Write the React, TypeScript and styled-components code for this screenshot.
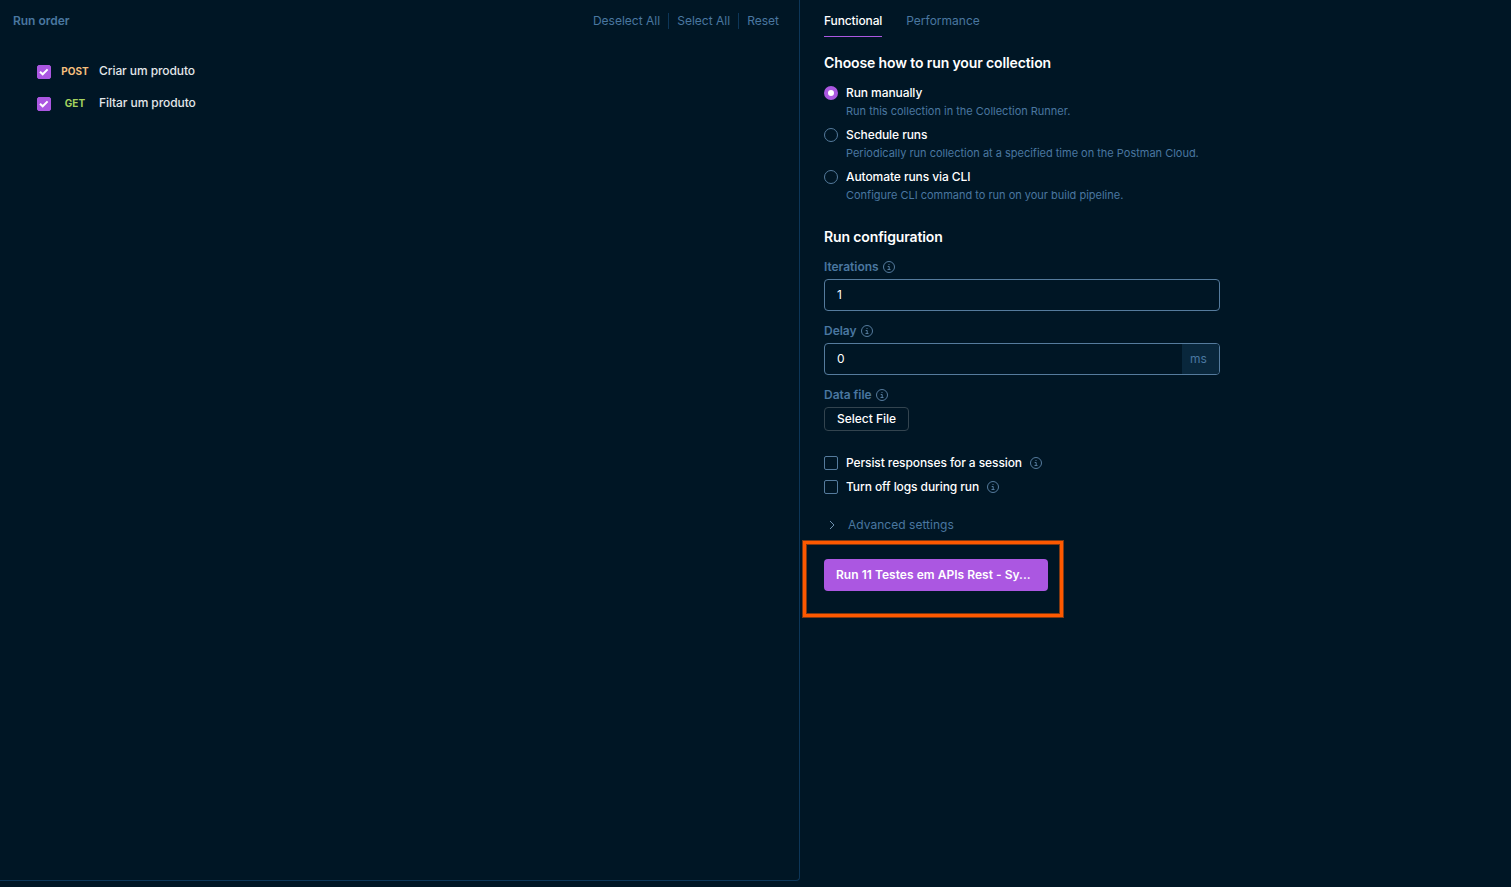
import React from "react";
import styled, { createGlobalStyle } from "styled-components";

const c = {
  bg: "#001625",
  line: "#0d3658",
  muted: "#4a77a0",
  control: "#557b9d",
  purple: "#ab57e1",
  white: "#ffffff",
};

const GlobalStyle = createGlobalStyle`
  * { box-sizing: border-box; }
  body {
    margin: 0;
    background: ${c.bg};
    color: ${c.white};
    font-family: Inter, "Liberation Sans", sans-serif;
    font-size: 12px;
    line-height: 16px;
  }
`;

const Page = styled.div`
  display: flex;
  align-items: flex-start;
  height: 887px;
  overflow: hidden;
`;

const OrderPanel = styled.section`
  width: 800px;
  height: 881px;
  flex: none;
  border: solid ${c.line};
  border-width: 0 1px 1px 0;
  border-bottom-right-radius: 4px;
`;

const OrderHeader = styled.header`
  display: flex;
  align-items: center;
  justify-content: space-between;
  height: 42px;
  padding: 0 12px 0 13px;
  color: ${c.muted};
`;

const OrderTitle = styled.span`
  font-weight: 600;
  letter-spacing: -0.03px;
`;

const Actions = styled.div`
  display: flex;
`;

const Action = styled.span`
  padding: 0 8px;
  letter-spacing: 0.01px;
  & + & {
    border-left: 1px solid ${c.line};
  }
`;

const Requests = styled.div`
  padding: 13px 0 0 37px;
`;

const RequestRow = styled.div`
  display: flex;
  align-items: center;
  height: 32px;
`;

const Method = styled.span<{ $color: string }>`
  width: 34px;
  margin: 0 7px 0 7px;
  text-align: center;
  font-size: 10px;
  font-weight: 700;
  color: ${(p) => p.$color};
`;

const RequestName = styled.span`
  font-weight: 500;
  color: #e3e7ea;
  letter-spacing: -0.08px;
`;

const Check = styled.span<{ $on?: boolean }>`
  display: flex;
  align-items: center;
  justify-content: center;
  flex: none;
  width: 14px;
  height: 14px;
  border: 1px solid ${(p) => (p.$on ? c.purple : c.control)};
  border-radius: 2px;
  background: ${(p) => (p.$on ? c.purple : "transparent")};
`;

const RequestCheck = styled(Check)`
  margin-top: 2px;
`;

const ConfigPanel = styled.section`
  flex: 1;
  padding: 0 0 0 24px;
`;

const Tabs = styled.nav`
  display: flex;
  gap: 24px;
  height: 37px;
`;

const Tab = styled.span<{ $active?: boolean }>`
  padding-top: 13px;
  color: ${(p) => (p.$active ? c.white : c.muted)};
  font-weight: ${(p) => (p.$active ? 500 : 400)};
  letter-spacing: ${(p) => (p.$active ? -0.12 : 0)}px;
  border-bottom: 1px solid ${(p) => (p.$active ? c.purple : "transparent")};
`;

const Heading = styled.h2<{ $top: number }>`
  margin: ${(p) => p.$top}px 0 0;
  font-size: 14px;
  font-weight: 600;
  line-height: 20px;
  letter-spacing: -0.12px;
`;

const RadioList = styled.div`
  padding-top: 12px;
`;

const RadioOption = styled.div`
  display: flex;
  gap: 8px;
  height: 42px;
`;

const Radio = styled.span<{ $on?: boolean }>`
  flex: none;
  width: 14px;
  height: 14px;
  margin-top: 1px;
  border-radius: 50%;
  border: ${(p) => (p.$on ? `4px solid ${c.purple}` : `1px solid ${c.control}`)};
  background: ${(p) => (p.$on ? c.white : "transparent")};
`;

const OptionLabel = styled.div`
  font-weight: 500;
  letter-spacing: -0.08px;
`;

const OptionHint = styled.div`
  margin-top: 2px;
  font-size: 11px;
  color: ${c.muted};
  letter-spacing: -0.01px;
`;

const FieldLabel = styled.div<{ $top: number }>`
  display: flex;
  align-items: center;
  gap: 4px;
  height: 16px;
  margin: ${(p) => p.$top}px 0 4px;
  font-weight: 600;
  letter-spacing: -0.03px;
  color: ${c.muted};
`;

const Input = styled.div`
  display: flex;
  align-items: center;
  justify-content: space-between;
  width: 396px;
  height: 32px;
  padding-left: 12px;
  border: 1px solid ${c.control};
  border-radius: 4px;
  overflow: hidden;
`;

const Unit = styled.span`
  display: flex;
  align-items: center;
  justify-content: center;
  width: 37px;
  height: 30px;
  padding-right: 4px;
  background: #09273c;
  color: ${c.muted};
`;

const FileButton = styled.div`
  display: flex;
  align-items: center;
  justify-content: center;
  width: 85px;
  height: 24px;
  border: 1px solid #33444f;
  border-radius: 4px;
  font-weight: 500;
`;

const CheckList = styled.div`
  display: flex;
  flex-direction: column;
  gap: 8px;
  padding-top: 24px;
`;

const CheckRow = styled.div`
  display: flex;
  align-items: center;
  gap: 8px;
  height: 16px;
  font-weight: 500;
  letter-spacing: -0.09px;
`;

const Advanced = styled.div`
  display: flex;
  align-items: center;
  gap: 10px;
  height: 16px;
  margin-top: 22px;
  padding-left: 2px;
  color: ${c.muted};
  letter-spacing: 0.03px;
`;

const Highlight = styled.div`
  width: 260px;
  height: 76px;
  margin: 8px 0 0 -21px;
  padding: 15px 0 0 18px;
  border: 3px solid #fe5900;
  box-shadow:
    0 0 0 1px rgba(254, 89, 0, 0.5),
    inset 0 0 0 1px rgba(254, 89, 0, 0.5);
`;

const RunButton = styled.div`
  width: 224px;
  height: 32px;
  padding: 0 12px;
  border-radius: 4px;
  background: ${c.purple};
  font-weight: 600;
  letter-spacing: 0.03px;
  line-height: 32px;
  white-space: nowrap;
`;

const Icon = styled.svg`
  display: block;
  flex: none;
  fill: none;
`;

const Tick = () => (
  <Icon width="12" height="12" viewBox="0 0 12 12" stroke="#fff" strokeWidth="2">
    <path d="M2 5.7 L4.7 8.3 L9.6 3.4" />
  </Icon>
);

const Info = () => (
  <Icon width="12" height="12" viewBox="0 0 12 12" stroke={c.control}>
    <circle cx="6" cy="6" r="5.5" />
    <path d="M4.7 5.5H6.2V8.5M4.5 8.5H7.5M5.5 3.5H6.5" />
  </Icon>
);

const Chevron = () => (
  <Icon width="12" height="12" viewBox="0 0 12 12" stroke="#6f91ae">
    <path d="M4 2 L8 6 L4 10" />
  </Icon>
);

const requests = [
  { method: "POST", color: "#f5bf7d", name: "Criar um produto" },
  { method: "GET", color: "#a4d35f", name: "Filtar um produto" },
];

const modes = [
  { label: "Run manually", hint: "Run this collection in the Collection Runner.", on: true },
  { label: "Schedule runs", hint: "Periodically run collection at a specified time on the Postman Cloud." },
  { label: "Automate runs via CLI", hint: "Configure CLI command to run on your build pipeline." },
];

export default function App() {
  return (
    <>
      <GlobalStyle />
      <Page>
        <OrderPanel>
          <OrderHeader>
            <OrderTitle>Run order</OrderTitle>
            <Actions>
              <Action>Deselect All</Action>
              <Action>Select All</Action>
              <Action>Reset</Action>
            </Actions>
          </OrderHeader>
          <Requests>
            {requests.map((r) => (
              <RequestRow key={r.name}>
                <RequestCheck $on>
                  <Tick />
                </RequestCheck>
                <Method $color={r.color}>{r.method}</Method>
                <RequestName>{r.name}</RequestName>
              </RequestRow>
            ))}
          </Requests>
        </OrderPanel>
        <ConfigPanel>
          <Tabs>
            <Tab $active>Functional</Tab>
            <Tab>Performance</Tab>
          </Tabs>
          <Heading $top={16}>Choose how to run your collection</Heading>
          <RadioList>
            {modes.map((m) => (
              <RadioOption key={m.label}>
                <Radio $on={m.on} />
                <div>
                  <OptionLabel>{m.label}</OptionLabel>
                  <OptionHint>{m.hint}</OptionHint>
                </div>
              </RadioOption>
            ))}
          </RadioList>
          <Heading $top={16}>Run configuration</Heading>
          <FieldLabel $top={12}>
            Iterations <Info />
          </FieldLabel>
          <Input>1</Input>
          <FieldLabel $top={12}>
            Delay <Info />
          </FieldLabel>
          <Input>
            0<Unit>ms</Unit>
          </Input>
          <FieldLabel $top={12}>
            Data file <Info />
          </FieldLabel>
          <FileButton>Select File</FileButton>
          <CheckList>
            <CheckRow>
              <Check />
              Persist responses for a session
              <Info />
            </CheckRow>
            <CheckRow>
              <Check />
              Turn off logs during run
              <Info />
            </CheckRow>
          </CheckList>
          <Advanced>
            <Chevron />
            Advanced settings
          </Advanced>
          <Highlight>
            <RunButton>Run 11 Testes em APIs Rest - Sy...</RunButton>
          </Highlight>
        </ConfigPanel>
      </Page>
    </>
  );
}
